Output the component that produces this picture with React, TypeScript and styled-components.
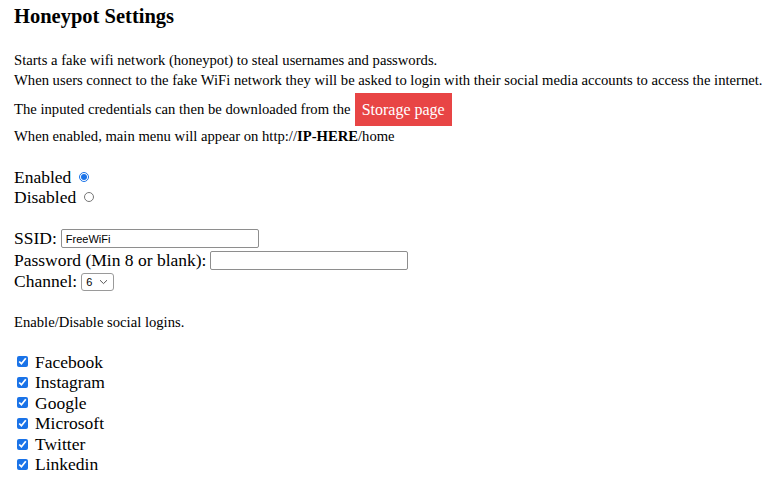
import React from "react";
import styled, { createGlobalStyle } from "styled-components";

const GlobalStyle = createGlobalStyle`
  html, body {
    margin: 0;
    padding: 0;
    background: #ffffff;
  }
  body {
    font-family: "Liberation Serif", "Times New Roman", serif;
    color: #000000;
  }
`;

const Page = styled.div`
  display: flex;
  flex-direction: column;
  align-items: flex-start;
  padding: 4px 0 0 14px;
`;

const Title = styled.h2`
  margin: 0;
  font-size: 20.5px;
  line-height: 24px;
  font-weight: bold;
`;

const Intro = styled.p`
  margin: 22px 0 0 0;
  font-size: 14.65px;
  line-height: 20px;
  white-space: nowrap;
`;

const StorageRow = styled.div`
  display: flex;
  align-items: center;
  gap: 4px;
  margin-top: 3px;
  font-size: 14.65px;
  white-space: nowrap;
`;

const StorageButton = styled.a`
  display: inline-flex;
  align-items: center;
  height: 33px;
  padding: 0 7px;
  background: #e84545;
  color: #ffffff;
  font-size: 16px;
  text-decoration: none;
  cursor: pointer;
`;

const Note = styled.p<{ $top: number }>`
  margin: ${(p) => p.$top}px 0 0 0;
  font-size: 14.65px;
  line-height: 18px;
  white-space: nowrap;
`;

const Group = styled.div<{ $top: number; $step: number }>`
  display: flex;
  flex-direction: column;
  margin-top: ${(p) => p.$top}px;
  font-size: 17.5px;
  line-height: ${(p) => p.$step}px;
`;

const Row = styled.label`
  display: flex;
  align-items: center;
  gap: 6px;
`;

const Radio = styled.input.attrs({ type: "radio" })`
  margin: 0 0 0 2px;
  width: 10px;
  height: 10px;
  accent-color: #1a73e8;
`;

const Check = styled.input.attrs({ type: "checkbox" })`
  margin: 0 1px 0 3px;
  width: 11px;
  height: 11px;
  accent-color: #1a73e8;
`;

const TextInput = styled.input<{ $width: number }>`
  box-sizing: border-box;
  width: ${(p) => p.$width}px;
  height: 19px;
  margin: 0;
  padding: 1px 4px;
  border: 1px solid #8e8e8e;
  border-radius: 2px;
  font-family: "Liberation Sans", Arial, sans-serif;
  font-size: 11px;
  color: #000;
`;

const Select = styled.select`
  box-sizing: border-box;
  appearance: none;
  height: 18px;
  width: 33px;
  margin: 0;
  padding: 0 0 0 4px;
  border: 1px solid #9a9a9a;
  border-radius: 3px;
  background: #fff
    url("data:image/svg+xml;utf8,<svg xmlns='http://www.w3.org/2000/svg' width='9' height='6' viewBox='0 0 9 6'><path d='M1 1.2 L4.5 4.6 L8 1.2' fill='none' stroke='%23555' stroke-width='1'/></svg>")
    no-repeat right 5px center;
  font-family: "Liberation Sans", Arial, sans-serif;
  font-size: 11px;
  color: #000;
`;

const FieldRow = styled.div`
  display: flex;
  align-items: center;
  gap: 4px;
`;

const socials = ["Facebook", "Instagram", "Google", "Microsoft", "Twitter", "Linkedin"];

const App = () => {
  return (
    <>
      <GlobalStyle />
      <Page>
        <Title>Honeypot Settings</Title>
        <Intro>
          Starts a fake wifi network (honeypot) to steal usernames and passwords.
          <br />
          When users connect to the fake WiFi network they will be asked to login with their social
          media accounts to access the internet.
        </Intro>
        <StorageRow>
          The inputed credentials can then be downloaded from the
          <StorageButton>Storage page</StorageButton>
        </StorageRow>
        <Note $top={1}>
          When enabled, main menu will appear on http://<b>IP-HERE</b>/home
        </Note>

        <Group $top={22} $step={20}>
          <Row>
            Enabled <Radio name="state" defaultChecked />
          </Row>
          <Row>
            Disabled <Radio name="state" />
          </Row>
        </Group>

        <Group $top={21} $step={21.5}>
          <FieldRow>
            SSID: <TextInput $width={198} defaultValue="FreeWiFi" />
          </FieldRow>
          <FieldRow>
            Password (Min 8 or blank): <TextInput $width={198} type="password" />
          </FieldRow>
          <FieldRow>
            Channel:
            <Select defaultValue="6">
              {Array.from({ length: 13 }, (_, i) => (
                <option key={i}>{i + 1}</option>
              ))}
            </Select>
          </FieldRow>
        </Group>

        <Note $top={20}>Enable/Disable social logins.</Note>

        <Group $top={21} $step={20.6}>
          {socials.map((s) => (
            <Row key={s}>
              <Check defaultChecked />
              {s}
            </Row>
          ))}
        </Group>
      </Page>
    </>
  );
};

export default App;
